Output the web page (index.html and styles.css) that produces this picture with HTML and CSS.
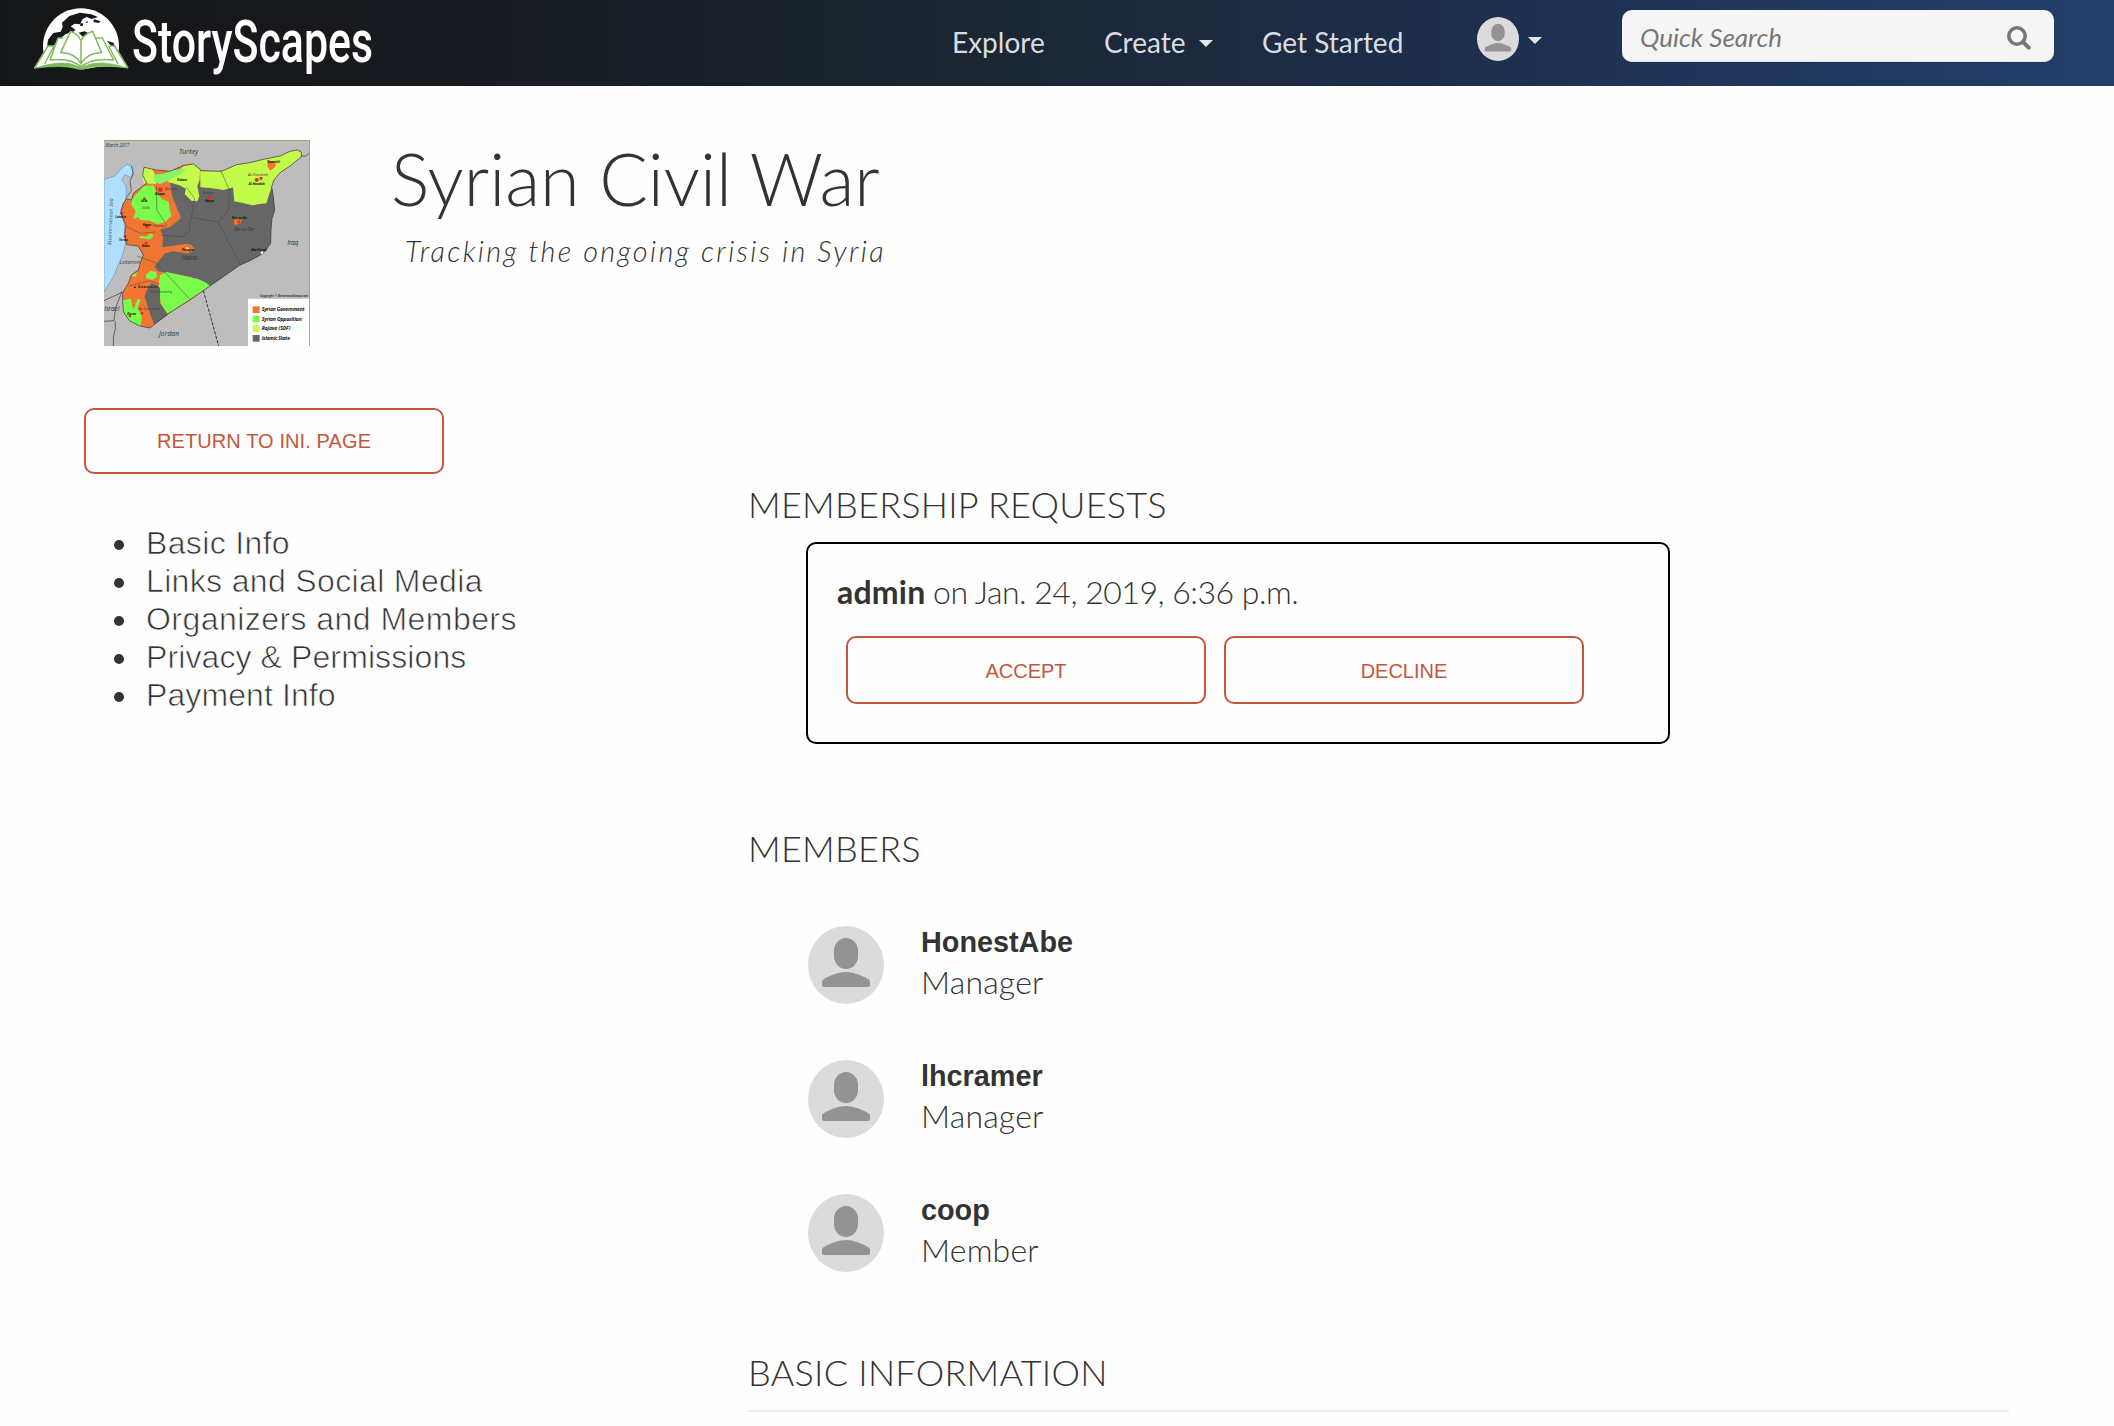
FILE: index.html
```html
<!DOCTYPE html>
<html lang="en">
<head>
<meta charset="utf-8">
<title>StoryScapes - Syrian Civil War</title>
<link rel="stylesheet" href="styles.css">
</head>
<body>
<svg class="defs" width="0" height="0" aria-hidden="true">
  <symbol id="person" viewBox="0 0 76 78" preserveAspectRatio="none">
    <ellipse cx="38" cy="39" rx="38" ry="39" fill="#dbdbdb"/>
    <rect x="26" y="12" width="24" height="31" rx="12" ry="13" fill="#939393"/>
    <path d="M14 56c0-1.500 1-2.500 2-3 7-4 15-7 22-7s15 3 22 7c1 .5 2 1.500 2 3v3q0 2-2 2H16q-2 0-2-2z" fill="#939393"/>
  </symbol>
</svg>
<header class="navbar">
  <a class="brand">
    <svg class="brand-logo" viewBox="39 0 1500 258" width="500" height="86">
      <path d="M71 160A114 114 0 1 1 295 160z" fill="#fff"/>
      <path d="M126 68L148 48 180 38l34 5 20 8-20 6-14-6-12 6-8 16-16-2-12 8 14 10-8 8-22 6-12 10-12 16-32 22 4-32 16-20 22 -4 6-14z" fill="#17181a"/>
      <path d="M222 58l20 6-6 5-16-3zM182 68l8 3-2 8-8-2zM176 98l18-4 16 8-20 10zM260 122l20 6 6 12-14-4zM196 66l8-2-2 6z" fill="#17181a"/>
      <path d="M42 204L84 138h18l14-24h16l20-22q20 8 31 30 11-22 36-30l14 24h18l14 24h18l42 64q-75-10-124 2H174q-50-14-132-2z" fill="#fff"/>
      <path d="M42 205Q130 176 174 199q9 5 18 0 44-23 132 5-90-12-130 3-10 3-22 0-40-14-130-2z" fill="#7dbb5d" stroke="#7dbb5d" stroke-width="2"/>
      <path d="M152 94L122 158q42-2 61 34 20-36 62-34L218 94q-26 8-35 28-10-20-31-28zM183 120v74M130 114h-16L90 180q60-8 93 20 36-28 98-20l-34-66h-18M102 138H84L44 204M74 192l28-54M266 138h18l40 66M294 192l-28-54" fill="none" stroke="#7dbb5d" stroke-width="4.500" stroke-linejoin="round"/>
      <text class="brand-text" x="336" y="187" textLength="723" lengthAdjust="spacingAndGlyphs">StoryScapes</text>
    </svg>
  </a>
  <nav class="menu">
    <a class="link explore">Explore</a>
    <a class="link create">Create<i class="caret"></i></a>
    <a class="link start">Get Started</a>
    <a class="account"><svg width="42" height="44"><use href="#person" width="42" height="44"/></svg><i class="caret"></i></a>
  </nav>
  <div class="search">
    <span class="placeholder">Quick Search</span>
    <svg width="24" height="24" viewBox="0 0 24 24" fill="none" stroke="#777" stroke-linecap="round"><circle cx="10" cy="10" r="8.200" stroke-width="3.600"/><path d="M16.500 16.500l5.200 5.200" stroke-width="4"/></svg>
  </div>
</header>
<main class="page">
  <section class="hero">
    <svg class="map" viewBox="42 30 618 618" width="206" height="206">
      <rect x="42" y="30" width="618" height="618" fill="#bdbdbd"/>
      <path d="M42 148L75 138 92 118 110 103l18 6 2 16-8 17-18-8-8 16 12 18 2 17-4 25-14 30 12 50 2 55-10 35-11 25-15 35-28 46z" fill="#b0dffb" stroke="#6b8fd0" stroke-width="2"/>
      <!-- government territory fills the whole country; the other areas lie on top -->
      <path d="M162 112l38 8 40 4 40-18 30-4 25 20 60 2 45-20 40-6 40-10 50-10 30-14 22-4 12 6v14l-34 28-30 20-18 22-7 20 5 30 4 40-8 25-3 35-1 40-22 30-40 22-30 13-90 63-60 42-70 44-50 40-30-6-32-16-18-27-2-30v-27l17-28 9-25 21-15 7-25 8-20-15-27-35-4-6-34 4-25-16-35 8-30 10-14 15 4 5-20 32-25 8-5-12-25z" fill="#f17632"/>
      <path d="M240 158l60-10 245 22 5 30 4 40-8 25-3 35-1 40-22 30-40 22-30 13-90 63-60-28-70-12-25-4-12-14 14-18 18-22 26-6 34 6q24 0 26-14-2-16-26-14l-68 10 2-32-8-20 30-10 32-26-26-64z" fill="#666"/>
      <path d="M162 112l24 5 9 17 4 28-38-2-4-22zM232 155l26-25 24-22 28-6 20 16-2 34-6 16 6 30-6 16-18-2-20-20 4-16-20-10zM331 124h64l30 26 5 22-30 8-38-6-31-2zM395 124l45-20 40-6 40-10 50-10 30-14 22-4 12 6v14l-34 28-30 20-18 22-7 20-16 50-20 2-22 4-32-8-22-4-4-42-10-28z" fill="#c4fc4c"/>
      <path d="M192 134l33-4 25-10 35-4-2 10-33 16-20 12-20 8-16-6z" fill="#83f56a"/>
      <path d="M126 206l36-38 28-2 8 16 18 24 20 10 4 24 4 18-18 18-25 6-22-10-26-2-10-8-14 6 8-24-13-18z" fill="#79fc4a"/>
      <path d="M148 318l20 2 14-10 8 8-8 10-32-4zM168 434l14-12 16 4 4 14-16 10-18-6zM206 460l4-24 20-10 70 16q40 6 60 26l-128 84-20-32z" fill="#79fc4a"/>
      <path d="M124 436l16-8-2 14zM98 488v22l24-4 8 34 13-34 9 3-10 26 14 24-4 30-34-15-18-29z" fill="#79fc4a"/>
      <path d="M172 476l12-16 16 4 10 10v46l24 34-42 30-14-40-14-44z" fill="#666"/>
      <path d="M534 92l20 2 4 14-16 14-10-12zM432 268l24 2-4 12-20 2z" fill="#f17632"/>
      <g fill="#d9302c"><circle cx="211" cy="179" r="7"/><circle cx="500" cy="150" r="6"/><circle cx="358" cy="204" r="7"/><circle cx="513" cy="145" r="5"/><circle cx="447" cy="276" r="5"/><circle cx="171" cy="290" r="5"/><circle cx="168" cy="340" r="5"/><circle cx="105" cy="320" r="4"/><circle cx="96" cy="250" r="4"/><circle cx="163" cy="206" r="4"/><circle cx="120" cy="558" r="4"/><circle cx="156" cy="550" r="4"/></g>
      <path d="M162 112l38 8 40 4 40-18 30-4 25 20 60 2 45-20 40-6 40-10 50-10 30-14 22-4 12 6v14l-34 28-30 20-18 22-7 20 5 30 4 40-8 25-3 35-1 40-22 30-40 22-30 13-90 63-60 42-70 44-50 40-30-6-32-16-18-27-2-30v-27l17-28 9-25 21-15 7-25 8-20-15-27-35-4-6-34 4-25-16-35 8-30 10-14 15 4 5-20 32-25 8-5-12-25zM634 78h14l12-10M124 108l6 24-10 20 4 30-14 20M42 512l26-12 30-14M96 484l-20 52-4 36-30 2M76 574v20l-6 30v24" fill="none" stroke="#333" stroke-width="2"/>
      <path d="M340 482l46 166" fill="none" stroke="#333" stroke-width="3" stroke-dasharray="10 4"/>
      <path d="M300 508l-100-108-60-22M290 172l24 34-10 56 80 14 32-36 2-60-26-60M384 274l68 132M302 262l-4 42-22 16-60-4M200 170v70l30 44-16 16M110 290l40 20 46-4M118 468l60-16 30 10" fill="none" stroke="#444" stroke-width="1.500"/>
      <circle cx="292" cy="356" r="4" fill="#fff"/><circle cx="516" cy="368" r="4" fill="#fff"/>
      <path d="M474 506h186v142H474z" fill="#fff"/>
      <path d="M488 529h21v20h-21z" fill="#f17632"/><path d="M488 557h21v20h-21z" fill="#79fc4a"/><path d="M488 586h21v20h-21z" fill="#c4fc4c"/><path d="M488 615h21v20h-21z" fill="#666"/>
      <g class="map-key"><text x="515" y="544" textLength="129">Syrian Government</text><text x="515" y="572" textLength="120">Syrian Opposition</text><text x="515" y="600" textLength="86">Rojava (SDF)</text><text x="515" y="630" textLength="85">Islamic State</text></g>
      <g class="map-country"><text x="267" y="73" textLength="58">Turkey</text><text x="592" y="345" textLength="33">Iraq</text><text x="207" y="619" textLength="60">Jordan</text><text x="43" y="543" textLength="45">Israel</text><text class="map-small" x="89" y="402" textLength="60">Lebanon</text><text x="275" y="389" textLength="46">Homs</text><text class="map-small" x="433" y="302" textLength="60">Der ez Zor</text><text class="map-small" x="46" y="50" textLength="72">March 2017</text><text class="map-small sea" transform="translate(64 345)rotate(-88)" textLength="140">Mediterranean Sea</text></g>
      <g class="map-city"><text x="195" y="194">Aleppo</text><text x="476" y="164">Al-Hasakah</text><text x="345" y="216">Raqqa</text><text x="426" y="267">Deir ez-Zor</text><text x="158" y="289">Hama</text><text x="155" y="350">Homs</text><text x="76" y="263">Latakia</text><text x="87" y="332">Tartus</text><text x="153" y="215">Idlib</text><text x="132" y="474" textLength="70">&#9632; Damascus</text><text x="276" y="363">Palmyra</text><text x="262" y="153">Kobani</text><text x="484" y="363">Abu Kamal</text><text x="112" y="556">Daraa</text><text x="532" y="100">Qamishli</text><text class="copyright" x="510" y="502" textLength="144">Copyright © Betterworldmap.com</text></g>
      <g class="map-region"><text x="474" y="138">Al-Hasakah</text><text x="338" y="192">Raqqa</text><text x="225" y="179">Aleppo</text><text x="156" y="236">Idlib</text><text x="188" y="290">Hama</text><text x="182" y="488">Rif Dimashq</text><text x="146" y="540">As Suwayda</text></g>
      <path d="M42 31h617v617" fill="none" stroke="#7fae4f" stroke-width="3"/>
    </svg>
    <div class="heading">
      <h1>Syrian Civil War</h1>
      <p class="tagline">Tracking the ongoing crisis in Syria</p>
    </div>
  </section>
  <div class="columns">
    <aside>
      <a class="btn return">RETURN TO INI. PAGE</a>
      <ul class="toc">
        <li>Basic Info</li>
        <li>Links and Social Media</li>
        <li class="wide">Organizers and Members</li>
        <li class="tight">Privacy &amp; Permissions</li>
        <li class="tight">Payment Info</li>
      </ul>
    </aside>
    <section class="content">
      <h2>MEMBERSHIP REQUESTS</h2>
      <div class="request">
        <p><b>admin</b> <span>on Jan. 24, 2019, 6:36 p.m.</span></p>
        <div class="actions"><a class="btn">ACCEPT</a><a class="btn">DECLINE</a></div>
      </div>
      <h2 class="members-title">MEMBERS</h2>
      <div class="members">
        <div class="member"><svg width="76" height="78"><use href="#person" width="76" height="78"/></svg><div class="who"><b>HonestAbe</b><span>Manager</span></div></div>
        <div class="member"><svg width="76" height="78"><use href="#person" width="76" height="78"/></svg><div class="who"><b>lhcramer</b><span>Manager</span></div></div>
        <div class="member"><svg width="76" height="78"><use href="#person" width="76" height="78"/></svg><div class="who"><b>coop</b><span>Member</span></div></div>
      </div>
      <h2 class="info-title">BASIC INFORMATION</h2>
      <hr>
    </section>
  </div>
</main>
</body>
</html>
```
FILE: styles.css
```css
* { box-sizing: border-box; }
body { margin: 0; height: 1426px; overflow: hidden; background: #fefefe; color: #333; font-family: Lato, sans-serif; }
svg { display: block; flex: none; }
.defs { position: absolute; }
h1, h2, p, ul { margin: 0; padding: 0; }

.navbar { display: flex; align-items: flex-start; height: 86px; background: linear-gradient(90deg, #151617 0, #17191d 16%, #1b2530 44%, #1e3050 72%, #223f6a 100%); color: #d9dde2; }
.brand { width: 920px; padding-left: 33px; }
.brand-text { font: 500 176px Roboto, sans-serif; fill: #fff; }
.menu { display: flex; width: 702px; padding-left: 32px; font-size: 28px; line-height: 34px; }
.link { display: flex; align-items: center; height: 34px; margin-top: 25px; white-space: nowrap; }
.explore { width: 152px; }
.create { width: 158px; gap: 13px; }
.start { width: 215px; }
.account { display: flex; align-items: center; gap: 9px; height: 44px; margin-top: 17px; }
.caret { width: 0; height: 0; margin-top: 2px; border: 7px solid transparent; border-top-color: #e4e6e9; border-bottom: 0; }
.search { display: flex; align-items: center; justify-content: space-between; width: 432px; height: 52px; margin-top: 10px; padding: 0 23px 4px 18px; border-radius: 10px; background: #f5f5f5; box-shadow: inset 0 -1px 1px #dcdfe3; color: #777; }
.search svg { margin-top: 7px; }
.placeholder { margin-top: 5px; font-size: 26px; font-style: italic; line-height: 32px; }

.page { padding: 54px 105px 0 84px; }
.hero { display: flex; padding-left: 20px; height: 268px; }
.heading { padding-left: 81px; margin-top: -5px; }
h1 { font-size: 72px; line-height: 86px; font-weight: 300; }
.tagline { margin-top: 13px; padding-left: 14px; font-size: 28.8px; line-height: 34px; font-style: italic; font-weight: 300; letter-spacing: 2.35px; }
.map text { font-family: "Open Sans", sans-serif; font-style: italic; }
.map-key text { font-size: 15px; font-weight: 700; fill: #111; }
.map-country text { font-size: 20px; fill: #333; }
.map-country .map-small { font-size: 14px; }
.map-country .sea { fill: #24589a; font-size: 15px; }
.map-city text { font-size: 9px; font-weight: 700; fill: #111; }
.map-city .copyright { font-weight: 600; }
.map-region text { font-size: 12px; fill: #444; }

.columns { display: grid; grid-template-columns: 664px 1fr; }
.btn { display: flex; align-items: center; justify-content: center; width: 360px; height: 68px; padding-top: 2px; border: 2px solid #c4563d; border-radius: 10px; color: #c4563d; font: 20px "Liberation Sans", sans-serif; }
.return { height: 66px; padding-top: 1px; letter-spacing: 0.1px; }
.toc { margin-top: 50px; padding-left: 30px; list-style: none; font: 32px/38px "Liberation Sans", sans-serif; letter-spacing: 0.35px; }
.toc li { display: flex; align-items: center; gap: 22px; -webkit-text-stroke: 0.7px #fefefe; }
.toc .wide { letter-spacing: 0.45px; }
.toc .tight { letter-spacing: 0.1px; }
.toc li::before { content: ""; width: 10px; height: 10px; margin-top: 3px; border-radius: 50%; background: #333; }
h2 { font-size: 36px; line-height: 45px; font-weight: 300; letter-spacing: 0.25px; white-space: nowrap; }
.content { padding-top: 74px; }
.request { width: 864px; height: 202px; margin: 15px 0 0 58px; padding: 28px 0 0 29px; border: 2px solid #000; border-radius: 10px; }
.request p { font-size: 32px; line-height: 40px; font-weight: 300; }
.request span { margin-left: -1px; letter-spacing: -0.48px; }
.request b { font-weight: 700; letter-spacing: 0.2px; }
.actions { display: flex; gap: 18px; margin: 24px 0 0 9px; }
.members-title { margin-top: 82px; }
.members { display: grid; gap: 56px; margin: 55px 0 0 60px; }
.member { display: flex; gap: 37px; height: 78px; }
.who { display: flex; flex-direction: column; margin-top: -2px; }
.who b { font: 700 28.8px/36px "Liberation Sans", sans-serif; }
.who span { margin-top: 2px; font-size: 32px; line-height: 40px; font-weight: 300; letter-spacing: 0.2px; }
.info-title { margin-top: 78px; }
hr { height: 2px; margin: 15px 0 0; border: 0; background: #ededed; }
```
